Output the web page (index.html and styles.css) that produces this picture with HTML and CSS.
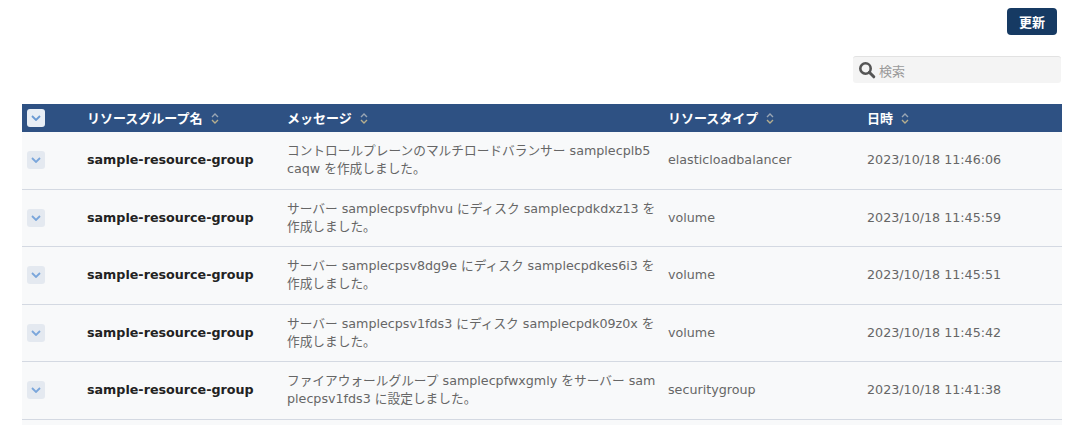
FILE: index.html
```html
<!DOCTYPE html>
<html lang="ja">
<head>
<meta charset="utf-8">
<link rel="stylesheet" href="styles.css">
</head>
<body>
<div class="page">
  <div class="toolbar">
    <button class="btn-update">更新</button>
  </div>
  <div class="searchbar">
    <div class="search">
      <svg class="search-icon" width="18" height="18" viewBox="0 0 18 18"><circle cx="7.5" cy="7.5" r="5.2" fill="none" stroke="#555" stroke-width="2.6"/><line x1="11.3" y1="11.3" x2="15.8" y2="15.8" stroke="#555" stroke-width="3" stroke-linecap="round"/></svg>
      <span class="placeholder">検索</span>
    </div>
  </div>
  <div class="table">
    <div class="row head">
      <div class="cell c-check"><span class="toggle head-toggle"><svg width="10" height="6" viewBox="0 0 10 6"><polyline points="1,1 5,5 9,1" fill="none" stroke="#6a9ad3" stroke-width="1.8"/></svg></span></div>
      <div class="cell c-name">リソースグループ名<svg class="sort" width="8" height="13" viewBox="0 0 8 13"><polyline points="1,5 4,2 7,5" fill="none" stroke="#9aa6b4" stroke-width="1.4"/><polyline points="1,8 4,11 7,8" fill="none" stroke="#b6ae8e" stroke-width="1.4"/></svg></div>
      <div class="cell c-msg">メッセージ <svg class="sort" width="8" height="13" viewBox="0 0 8 13"><polyline points="1,5 4,2 7,5" fill="none" stroke="#9aa6b4" stroke-width="1.4"/><polyline points="1,8 4,11 7,8" fill="none" stroke="#b6ae8e" stroke-width="1.4"/></svg></div>
      <div class="cell c-type">リソースタイプ <svg class="sort" width="8" height="13" viewBox="0 0 8 13"><polyline points="1,5 4,2 7,5" fill="none" stroke="#9aa6b4" stroke-width="1.4"/><polyline points="1,8 4,11 7,8" fill="none" stroke="#b6ae8e" stroke-width="1.4"/></svg></div>
      <div class="cell c-date">日時 <svg class="sort" width="8" height="13" viewBox="0 0 8 13"><polyline points="1,5 4,2 7,5" fill="none" stroke="#9aa6b4" stroke-width="1.4"/><polyline points="1,8 4,11 7,8" fill="none" stroke="#b6ae8e" stroke-width="1.4"/></svg></div>
    </div>

    <div class="row">
      <div class="cell c-check"><span class="toggle"><svg width="10" height="6" viewBox="0 0 10 6"><polyline points="1,1 5,5 9,1" fill="none" stroke="#7aa6db" stroke-width="1.8"/></svg></span></div>
      <div class="cell c-name">sample-resource-group</div>
      <div class="cell c-msg">コントロールプレーンのマルチロードバランサー samplecplb5caqw を作成しました。</div>
      <div class="cell c-type">elasticloadbalancer</div>
      <div class="cell c-date">2023/10/18 11:46:06</div>
    </div>
    <div class="row">
      <div class="cell c-check"><span class="toggle"><svg width="10" height="6" viewBox="0 0 10 6"><polyline points="1,1 5,5 9,1" fill="none" stroke="#7aa6db" stroke-width="1.8"/></svg></span></div>
      <div class="cell c-name">sample-resource-group</div>
      <div class="cell c-msg">サーバー samplecpsvfphvu にディスク samplecpdkdxz13 を作成しました。</div>
      <div class="cell c-type">volume</div>
      <div class="cell c-date">2023/10/18 11:45:59</div>
    </div>
    <div class="row">
      <div class="cell c-check"><span class="toggle"><svg width="10" height="6" viewBox="0 0 10 6"><polyline points="1,1 5,5 9,1" fill="none" stroke="#7aa6db" stroke-width="1.8"/></svg></span></div>
      <div class="cell c-name">sample-resource-group</div>
      <div class="cell c-msg">サーバー samplecpsv8dg9e にディスク samplecpdkes6i3 を作成しました。</div>
      <div class="cell c-type">volume</div>
      <div class="cell c-date">2023/10/18 11:45:51</div>
    </div>
    <div class="row">
      <div class="cell c-check"><span class="toggle"><svg width="10" height="6" viewBox="0 0 10 6"><polyline points="1,1 5,5 9,1" fill="none" stroke="#7aa6db" stroke-width="1.8"/></svg></span></div>
      <div class="cell c-name">sample-resource-group</div>
      <div class="cell c-msg">サーバー samplecpsv1fds3 にディスク samplecpdk09z0x を作成しました。</div>
      <div class="cell c-type">volume</div>
      <div class="cell c-date">2023/10/18 11:45:42</div>
    </div>
    <div class="row">
      <div class="cell c-check"><span class="toggle"><svg width="10" height="6" viewBox="0 0 10 6"><polyline points="1,1 5,5 9,1" fill="none" stroke="#7aa6db" stroke-width="1.8"/></svg></span></div>
      <div class="cell c-name">sample-resource-group</div>
      <div class="cell c-msg">ファイアウォールグループ samplecpfwxgmly をサーバー samplecpsv1fds3 に設定しました。</div>
      <div class="cell c-type">securitygroup</div>
      <div class="cell c-date">2023/10/18 11:41:38</div>
    </div>
    <div class="tail"></div>
  </div>
</div>
</body>
</html>
```

FILE: styles.css
```css
* { box-sizing: border-box; }
html, body { margin: 0; padding: 0; background: #ffffff; }
body {
  font-family: "DejaVu Sans", "Noto Sans CJK JP", sans-serif;
  font-size: 12.7px;
  color: #333;
}
.page { padding: 8px 18px 0 22px; }
.toolbar { display: flex; justify-content: flex-end; padding-right: 5px; }
.btn-update {
  height: 27px;
  padding: 0 12px;
  border: none;
  border-radius: 4px;
  background: #163a63;
  color: #fff;
  font-family: "Noto Sans CJK JP", sans-serif;
  font-weight: bold;
  font-size: 13px;
  line-height: 27px;
}
.searchbar { display: flex; justify-content: flex-end; margin-top: 21px; padding-right: 1px; }
.search {
  width: 208px;
  height: 27px;
  background: #f4f4f4;
  border-radius: 3px;
  border-top: 1px solid #e2e2e2;
  display: flex;
  align-items: center;
  padding-left: 5px;
  gap: 3px;
}
.placeholder { color: #9a9a9a; font-family: "Noto Sans CJK JP", sans-serif; font-size: 13px; }
.table { margin-top: 21px; background: #f8f9fa; }
.row {
  display: grid;
  grid-template-columns: 65px 200px 381px 199px 195px;
  height: 57.5px;
  border-bottom: 1px solid #d4d9e2;
  align-items: center;
}
.cell { display: flex; align-items: center; line-height: 18px; color: #666; }
.row.head {
  height: 28px;
  background: #2e5183;
  border-bottom: none;
  font-family: "Noto Sans CJK JP", sans-serif;
  font-size: 13px;
}
.row.head .cell { color: #fff; font-weight: bold; }
.c-check { padding-left: 5px; }
.toggle {
  width: 18px; height: 18px;
  border-radius: 3px;
  background: #e4e9f0;
  display: flex; align-items: center; justify-content: center;
}
.head-toggle { background: #e8eef5; }
.sort { margin-left: 8px; }
.row:not(.head) .c-name { font-weight: bold; color: #222; }
.row:not(.head) .c-msg {
  word-break: break-all;
  padding-right: 12.5px;
}
.tail { height: 5px; }
```
